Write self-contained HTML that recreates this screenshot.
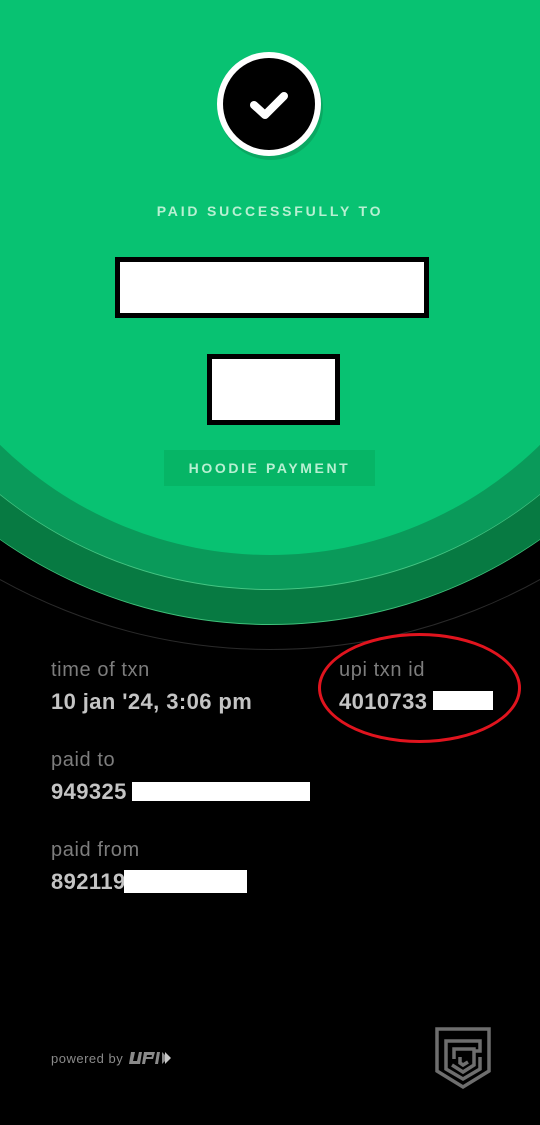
<!DOCTYPE html>
<html><head><meta charset="utf-8"><style>
*{margin:0;padding:0;box-sizing:border-box}
html,body{width:540px;height:1125px;background:#000;overflow:hidden;position:relative;font-family:"Liberation Sans",sans-serif}
.abs{position:absolute}
.circ{position:absolute;border-radius:50%}
.lbl{position:absolute;color:#7d7d7d;font-size:20px;letter-spacing:0.6px}
.val{position:absolute;color:#c4c4c4;font-size:22px;font-weight:bold;letter-spacing:0.4px}
.wb{position:absolute;background:#fff}
</style></head><body>
<div class="circ" style="left:-286px;top:94px;width:1112px;height:1112px;border:1px solid #2a2a2a;top:94px;transform:translateY(-556px)"></div>
<div class="circ" style="left:-201px;top:-317px;width:942px;height:942px;background:#077a42;border-bottom:1px solid #3fc07a"></div>
<div class="circ" style="left:-161px;top:-272px;width:862px;height:862px;background:#0a9a5a;border-bottom:1px solid #45c583"></div>
<div class="circ" style="left:-116px;top:-217px;width:772px;height:772px;background:#08c272"></div>

<svg class="abs" style="left:216px;top:52px" width="110" height="110" viewBox="0 0 110 110">
<circle cx="55" cy="56" r="52" fill="#0aa862"/>
<circle cx="53" cy="52" r="52" fill="#fff"/>
<circle cx="53" cy="52" r="46" fill="#000"/>
<path d="M38 53 L49 63 L68 44" stroke="#fff" stroke-width="8" fill="none" stroke-linecap="round" stroke-linejoin="round"/>
</svg>

<div class="abs" style="left:0;width:540px;top:203px;text-align:center;color:#b8f0d2;font-size:14px;font-weight:bold;letter-spacing:2.8px">PAID SUCCESSFULLY TO</div>
<div class="abs" style="left:115px;top:257px;width:314px;height:61px;background:#fff;border:5px solid #000"></div>
<div class="abs" style="left:207px;top:354px;width:133px;height:71px;background:#fff;border:5px solid #000"></div>
<div class="abs" style="left:164px;top:450px;width:211px;height:36px;background:#06b566;color:#b8f0d2;font-size:14px;font-weight:bold;letter-spacing:2.6px;text-align:center;line-height:36px">HOODIE PAYMENT</div>

<div class="lbl" style="left:51px;top:659px">time of txn</div>
<div class="val" style="left:51px;top:689px">10 jan '24, 3:06 pm</div>
<div class="lbl" style="left:339px;top:659px">upi txn id</div>
<div class="val" style="left:339px;top:689px">4010733</div>
<div class="wb" style="left:433px;top:691px;width:60px;height:19px"></div>
<div class="abs" style="left:318px;top:633px;width:203px;height:110px;border:3px solid #e0141e;border-radius:50%"></div>

<div class="lbl" style="left:51px;top:749px">paid to</div>
<div class="val" style="left:51px;top:779px">949325</div>
<div class="wb" style="left:132px;top:782px;width:178px;height:19px"></div>
<div class="lbl" style="left:51px;top:839px">paid from</div>
<div class="val" style="left:51px;top:869px">892119</div>
<div class="wb" style="left:124px;top:870px;width:123px;height:23px"></div>

<div class="abs" style="left:51px;top:1051px;color:#8a8a8a;font-size:13px;letter-spacing:0.5px">powered by</div>
<svg class="abs" style="left:128px;top:1050px" width="44" height="16" viewBox="0 0 44 16">
<path d="M3 2 L1 14 L12 14 L14 2 L11 2 L9 11 L5 11 L7 2Z M16 2 L14 14 L17 14 L18 9 L25 9 L27 2Z M19 5 L24 5 L23.5 7 L18.5 7Z M29 2 L27 14 L30 14 L32 2Z" fill="#8a8a8a" fill-rule="evenodd"/>
<path d="M34 2 L40 8 L34 14Z" fill="#8a8a8a"/><path d="M37 2 L43 8 L37 14Z" fill="#c8c8c8"/>
</svg>

<svg class="abs" style="left:434px;top:1027px" width="58" height="64" viewBox="0 0 58 64">
<g fill="none" stroke="#6e6e6e" stroke-width="3.5">
<path d="M3 2 L55 2 L55 44 L29 60 L3 44 Z"/>
<path d="M12 34 L12 14 L46 14 L46 24 L40 24"/>
<path d="M20 32 L20 22 L40 22 L40 38 L29 45 L18 38"/>
<path d="M12 34 L12 42 L29 52 L46 42 L46 30"/>
<path d="M26 30 L26 36 L29 38 L34 35"/>
</g></svg>
</body></html>
